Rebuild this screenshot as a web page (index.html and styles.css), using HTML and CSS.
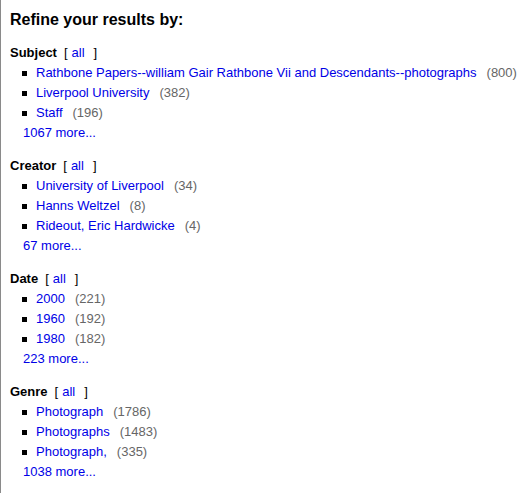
FILE: index.html
```html
<!DOCTYPE html>
<html>
<head>
<meta charset="utf-8">
<link rel="stylesheet" href="styles.css">
</head>
<body>
<div class="panel">
  <h2 class="title">Refine your results by:</h2>

  <div class="facet">
    <div class="facet-head"><span class="facet-name">Subject</span><span class="bracket">[</span><a class="all" href="#">all</a><span class="bracket">]</span></div>
    <ul class="facet-list">
      <li><a href="#">Rathbone Papers--william Gair Rathbone Vii and Descendants--photographs</a><span class="count">(800)</span></li>
      <li><a href="#">Liverpool University</a><span class="count">(382)</span></li>
      <li><a href="#">Staff</a><span class="count">(196)</span></li>
    </ul>
    <a class="more" href="#">1067 more...</a>
  </div>

  <div class="facet">
    <div class="facet-head"><span class="facet-name">Creator</span><span class="bracket">[</span><a class="all" href="#">all</a><span class="bracket">]</span></div>
    <ul class="facet-list">
      <li><a href="#">University of Liverpool</a><span class="count">(34)</span></li>
      <li><a href="#">Hanns Weltzel</a><span class="count">(8)</span></li>
      <li><a href="#">Rideout, Eric Hardwicke</a><span class="count">(4)</span></li>
    </ul>
    <a class="more" href="#">67 more...</a>
  </div>

  <div class="facet">
    <div class="facet-head"><span class="facet-name">Date</span><span class="bracket">[</span><a class="all" href="#">all</a><span class="bracket">]</span></div>
    <ul class="facet-list">
      <li><a href="#">2000</a><span class="count">(221)</span></li>
      <li><a href="#">1960</a><span class="count">(192)</span></li>
      <li><a href="#">1980</a><span class="count">(182)</span></li>
    </ul>
    <a class="more" href="#">223 more...</a>
  </div>

  <div class="facet">
    <div class="facet-head"><span class="facet-name">Genre</span><span class="bracket">[</span><a class="all" href="#">all</a><span class="bracket">]</span></div>
    <ul class="facet-list">
      <li><a href="#">Photograph</a><span class="count">(1786)</span></li>
      <li><a href="#">Photographs</a><span class="count">(1483)</span></li>
      <li><a href="#">Photograph,</a><span class="count">(335)</span></li>
    </ul>
    <a class="more" href="#">1038 more...</a>
  </div>
</div>
</body>
</html>
```

FILE: styles.css
```css
html, body {
  margin: 0;
  padding: 0;
  background: #fff;
}

body {
  font-family: "Liberation Sans", Arial, sans-serif;
  font-size: 13px;
  color: #000;
}

.panel {
  border-left: 1px solid #8a8a8a;
  min-height: 493px;
  box-sizing: border-box;
  padding: 9px 0 0 9px;
}

.title {
  margin: 0 0 11px 0;
  font-size: 16px;
  font-weight: bold;
  line-height: 22px;
}

.facet {
  margin-bottom: 12px;
}

.facet-head {
  line-height: 21px;
  height: 21px;
}

.facet-name {
  font-weight: bold;
  margin-right: 7px;
}

.bracket {
  color: #000;
}

.all {
  margin: 0 9px 0 4px;
}

a {
  color: #0000e6;
  text-decoration: none;
}

.facet-list {
  list-style: none;
  margin: 0;
  padding: 0 0 0 12px;
}

.facet-list li {
  display: flex;
  align-items: center;
  line-height: 20px;
  height: 20px;
  white-space: nowrap;
}

.facet-list li::before {
  content: "";
  width: 5px;
  height: 5px;
  background: #000;
  margin-right: 9px;
  flex: none;
}

.count {
  color: #666;
  margin-left: 10px;
}

.more {
  display: block;
  line-height: 20px;
  height: 20px;
  padding-left: 13px;
}
```
